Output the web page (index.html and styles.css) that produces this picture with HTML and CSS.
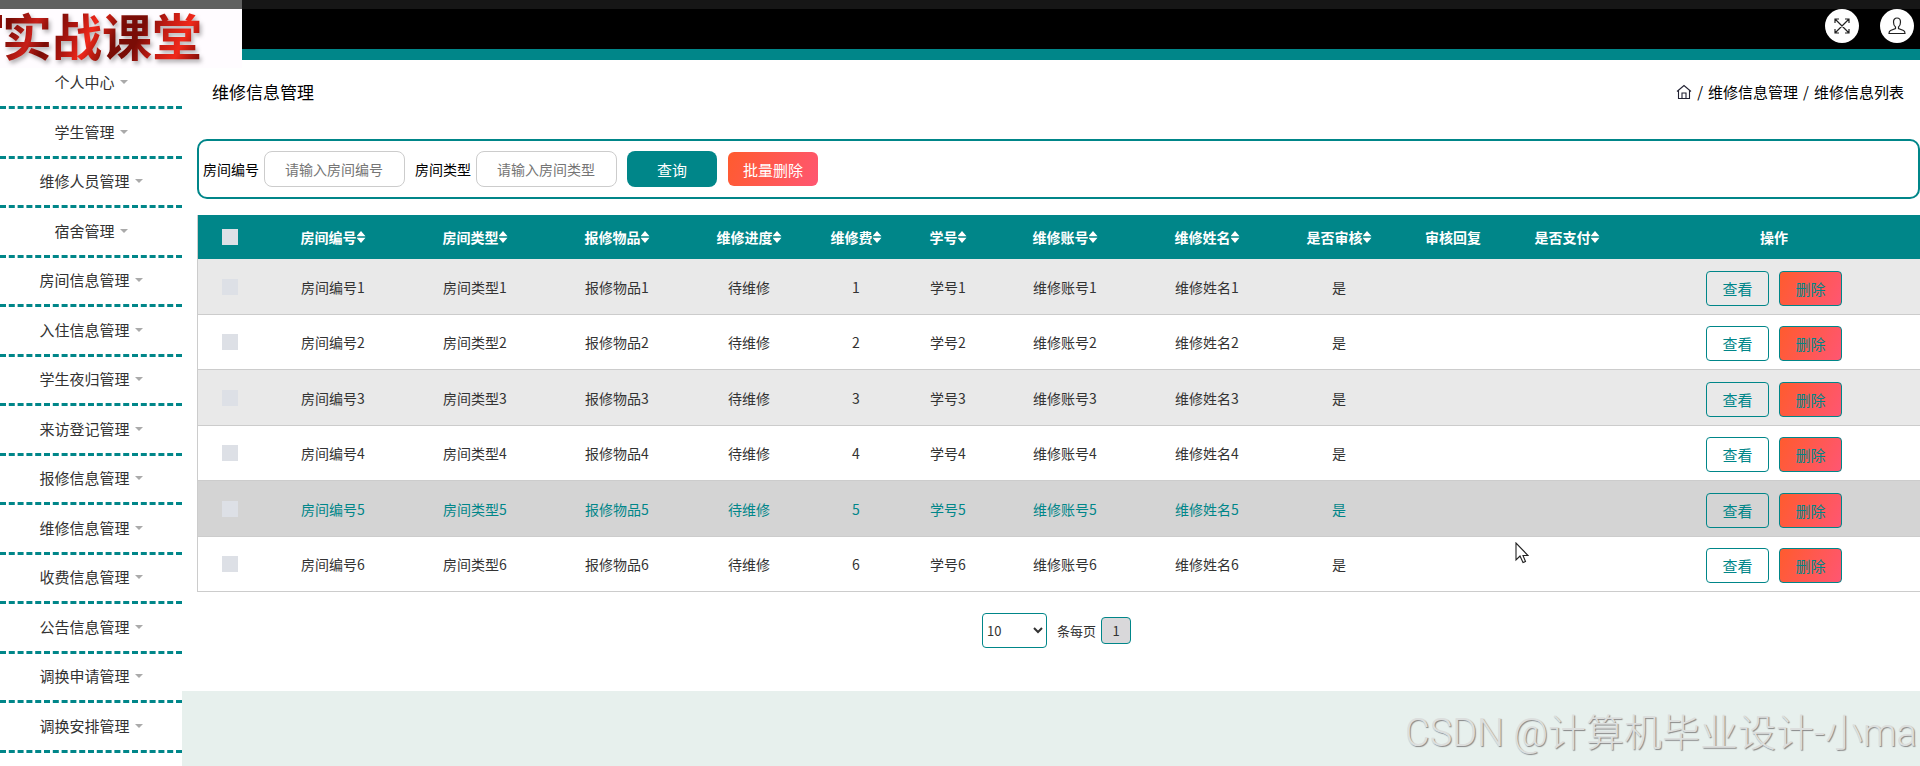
FILE: index.html
```html
<!doctype html>
<html lang="zh-CN">
    <head>
        <meta charset="utf-8">
        <title>维修信息管理</title>
        <meta name="viewport" content="width=device-width, initial-scale=1">
        <link rel="stylesheet" href="styles.css">
    </head>
    <body>
        <header class="header">
            <div class="logo"><span class="logo-text">实战课堂</span></div>
            <div class="header-tools">
                <button class="tool" type="button" aria-label="全屏">
                    <svg width="18" height="18" viewBox="0 0 18 18" fill="none" stroke="#222" stroke-width="1.2">
                        <path d="M2 2l14 14M16 2L2 16M2 6V2h4M12 2h4v4M16 12v4h-4M6 16H2v-4"/>
                    </svg>
                </button>
                <button class="tool" type="button" aria-label="用户">
                    <svg width="18" height="18" viewBox="0 0 18 18" fill="none" stroke="#222" stroke-width="1.2">
                        <path d="M7.500 11.500V10C6 9 5.500 7 5.500 5 5.500 2.500 7 1 9 1s3.500 1.500 3.500 4c0 2-.5 4-2 5v1.500l5 2c1 .5 1.500 1.500 1.500 3H1c0-1.500.5-2.500 1.500-3z"/>
                    </svg>
                </button>
            </div>
        </header>

        <div class="wrapper">
            <nav class="sidebar">
                <ul class="menu">
                    <li><a href="#">个人中心</a></li>
                    <li><a href="#">学生管理</a></li>
                    <li><a href="#">维修人员管理</a></li>
                    <li><a href="#">宿舍管理</a></li>
                    <li><a href="#">房间信息管理</a></li>
                    <li><a href="#">入住信息管理</a></li>
                    <li><a href="#">学生夜归管理</a></li>
                    <li><a href="#">来访登记管理</a></li>
                    <li><a href="#">报修信息管理</a></li>
                    <li><a href="#">维修信息管理</a></li>
                    <li><a href="#">收费信息管理</a></li>
                    <li><a href="#">公告信息管理</a></li>
                    <li><a href="#">调换申请管理</a></li>
                    <li><a href="#">调换安排管理</a></li>
                </ul>
            </nav>

            <main class="content">
                <div class="page">
                    <div class="page-head">
                        <h1 class="page-title">维修信息管理</h1>
                        <div class="breadcrumb">
                            <a href="#" aria-label="首页">
                                <svg width="16" height="16" viewBox="0 0 16 16" fill="none" stroke="#223" stroke-width="1.1">
                                    <path d="M1 7.500L8 1.500l7 6M2.500 6.500v8h11v-8M6 14.500V9h4v5.500"/>
                                </svg>
                            </a>
                            <span>/</span>
                            <a href="#">维修信息管理</a>
                            <span>/</span>
                            <span>维修信息列表</span>
                        </div>
                    </div>

                    <form class="search">
                        <label for="room-no">房间编号</label>
                        <input class="search-input" id="room-no" type="text" placeholder="请输入房间编号">
                        <label for="room-type">房间类型</label>
                        <input class="search-input" id="room-type" type="text" placeholder="请输入房间类型">
                        <button class="btn btn-query" type="button">查询</button>
                        <button class="btn btn-batch" type="button">批量删除</button>
                    </form>

                    <table class="list">
                        <colgroup>
                            <col class="col-check">
                            <col class="col-wide"><col class="col-wide"><col class="col-wide">
                            <col class="col-mid"><col class="col-small"><col class="col-small">
                            <col class="col-wide"><col class="col-wide">
                            <col class="col-mid"><col class="col-reply"><col class="col-mid">
                            <col>
                        </colgroup>
                        <thead>
                            <tr>
                                <th><input class="check" type="checkbox" aria-label="全选"></th>
                                <th><span class="sort">房间编号</span></th>
                                <th><span class="sort">房间类型</span></th>
                                <th><span class="sort">报修物品</span></th>
                                <th><span class="sort">维修进度</span></th>
                                <th><span class="sort">维修费</span></th>
                                <th><span class="sort">学号</span></th>
                                <th><span class="sort">维修账号</span></th>
                                <th><span class="sort">维修姓名</span></th>
                                <th><span class="sort">是否审核</span></th>
                                <th>审核回复</th>
                                <th><span class="sort">是否支付</span></th>
                                <th>操作</th>
                            </tr>
                        </thead>
                        <tbody>
                            <tr>
                                <td><input class="check" type="checkbox" aria-label="选择1"></td>
                                <td>房间编号1</td><td>房间类型1</td><td>报修物品1</td><td>待维修</td><td>1</td>
                                <td>学号1</td><td>维修账号1</td><td>维修姓名1</td><td>是</td><td></td><td></td>
                                <td><div class="actions"><button class="btn-view" type="button">查看</button><button class="btn-view btn-del" type="button">删除</button></div></td>
                            </tr>
                            <tr>
                                <td><input class="check" type="checkbox" aria-label="选择2"></td>
                                <td>房间编号2</td><td>房间类型2</td><td>报修物品2</td><td>待维修</td><td>2</td>
                                <td>学号2</td><td>维修账号2</td><td>维修姓名2</td><td>是</td><td></td><td></td>
                                <td><div class="actions"><button class="btn-view" type="button">查看</button><button class="btn-view btn-del" type="button">删除</button></div></td>
                            </tr>
                            <tr>
                                <td><input class="check" type="checkbox" aria-label="选择3"></td>
                                <td>房间编号3</td><td>房间类型3</td><td>报修物品3</td><td>待维修</td><td>3</td>
                                <td>学号3</td><td>维修账号3</td><td>维修姓名3</td><td>是</td><td></td><td></td>
                                <td><div class="actions"><button class="btn-view" type="button">查看</button><button class="btn-view btn-del" type="button">删除</button></div></td>
                            </tr>
                            <tr>
                                <td><input class="check" type="checkbox" aria-label="选择4"></td>
                                <td>房间编号4</td><td>房间类型4</td><td>报修物品4</td><td>待维修</td><td>4</td>
                                <td>学号4</td><td>维修账号4</td><td>维修姓名4</td><td>是</td><td></td><td></td>
                                <td><div class="actions"><button class="btn-view" type="button">查看</button><button class="btn-view btn-del" type="button">删除</button></div></td>
                            </tr>
                            <tr class="current">
                                <td><input class="check" type="checkbox" aria-label="选择5"></td>
                                <td>房间编号5</td><td>房间类型5</td><td>报修物品5</td><td>待维修</td><td>5</td>
                                <td>学号5</td><td>维修账号5</td><td>维修姓名5</td><td>是</td><td></td><td></td>
                                <td><div class="actions"><button class="btn-view" type="button">查看</button><button class="btn-view btn-del" type="button">删除</button></div></td>
                            </tr>
                            <tr>
                                <td><input class="check" type="checkbox" aria-label="选择6"></td>
                                <td>房间编号6</td><td>房间类型6</td><td>报修物品6</td><td>待维修</td><td>6</td>
                                <td>学号6</td><td>维修账号6</td><td>维修姓名6</td><td>是</td><td></td><td></td>
                                <td><div class="actions"><button class="btn-view" type="button">查看</button><button class="btn-view btn-del" type="button">删除</button></div></td>
                            </tr>
                        </tbody>
                    </table>

                    <div class="pager">
                        <select class="pager-size" id="page-size">
                            <option>10</option>
                            <option>25</option>
                            <option>50</option>
                        </select>
                        <label for="page-size">条每页</label>
                        <button class="pager-num" type="button">1</button>
                    </div>
                </div>
            </main>
        </div>

        <div class="watermark">CSDN @计算机毕业设计-小ma</div>
        <svg class="cursor" width="14" height="22" viewBox="0 0 14 22" fill="#fff" stroke="#222" stroke-width="1.1">
            <path d="M1 1v17l4-4 3 6.500 2.500-1L8 13.500h5z"/>
        </svg>
    </body>
</html>
```
FILE: styles.css
```css
* {
    box-sizing: border-box;
    margin: 0;
    padding: 0;
}

html, body {
    height: 100%;
}

body {
    position: relative;
    display: flex;
    flex-direction: column;
    background: #fff;
    color: #333;
    font-family: "Noto Sans CJK SC", sans-serif;
    font-size: 14px;
    line-height: 20px;
}

button, input, select {
    font-family: inherit;
}

a {
    color: inherit;
    text-decoration: none;
}

/* header */
.header {
    display: flex;
    flex: none;
    height: 60px;
    background: #000;
    border-top: 9px solid #161616;
    border-bottom: 11px solid #008689;
}

.logo {
    display: flex;
    align-items: flex-start;
    justify-content: space-between;
    position: relative;
    width: 242px;
    height: 68px;
    margin-top: -9px;
    padding-right: 40px;
    background: #fffcff;
    border-top: 9px solid #606060;
}

/* red edge at the left side of the logo */
.logo::before {
    content: "";
    width: 2px;
    height: 13px;
    margin-top: 6px;
    background: #8a0e08;
}

.logo-text {
    padding-bottom: 8px;
    font-size: 50px;
    font-weight: 700;
    line-height: 50px;
    color: transparent;
    background: linear-gradient(115deg, #7a0c06 6%, #c8201a 18%, #7a0c06 26%, #b01610 36%, #f0281a 44%, #7a0c06 56%, #7a0c06 66%, #b81a12 74%, #f0281a 86%, #7a0c06 98%);
    -webkit-background-clip: text;
    background-clip: text;
    filter: drop-shadow(2px 3px 2px rgba(0, 0, 0, 0.3));
}

.header-tools {
    display: flex;
    gap: 21px;
    margin-left: auto;
    padding-right: 6px;
}

.tool {
    display: flex;
    align-items: center;
    justify-content: center;
    width: 34px;
    height: 34px;
    background: #fff;
    border: 0;
    border-radius: 50%;
}

.wrapper {
    display: flex;
    flex: 1;
}

/* sidebar */
.sidebar {
    flex: none;
    width: 182px;
}

.menu {
    list-style: none;
}

.menu a {
    display: flex;
    align-items: center;
    justify-content: center;
    gap: 5px;
    height: 49px;
    padding-bottom: 2px;
    border-bottom: 3px dashed #008689;
    font-size: 15px;
}

.menu li:nth-child(even) a {
    height: 50px;
}

.menu a::after {
    content: "";
    border: 4px solid transparent;
    border-top-color: #aaa;
    border-bottom: 0;
}

/* content */
.content {
    flex: 1;
    min-width: 0;
    background: #e7f0ed;
}

.page {
    padding: 0 0 43px 15px;
    background: #fff;
}

.page-head {
    display: flex;
    align-items: center;
    justify-content: space-between;
    height: 79px;
    padding: 0 16px 16px 15px;
    color: #000;
}

.page-title {
    font-size: 17px;
    font-weight: 400;
}

.breadcrumb {
    display: flex;
    align-items: center;
    gap: 5px;
    font-size: 15px;
}

.breadcrumb svg {
    display: block;
}

.search {
    display: flex;
    align-items: center;
    height: 60px;
    padding: 0 4px;
    border: 2px solid #008689;
    border-radius: 10px;
    color: #000;
}

.search-input {
    width: 141px;
    height: 36px;
    margin: 0 10px 0 5px;
    padding: 0 20px;
    border: 1px solid #ccc;
    border-radius: 8px;
    font-size: 14px;
}

.search-input::placeholder {
    color: #757575;
}

.btn {
    width: 90px;
    height: 36px;
    border: 0;
    border-radius: 8px;
    color: #fff;
    font-size: 15px;
}

.btn-query {
    margin-right: 11px;
    background: #008689;
}

.btn-batch {
    height: 34px;
    border-radius: 6px;
    background: linear-gradient(115deg, #ff5b2e, #ff5672);
}

/* table */
.list {
    width: 100%;
    margin-top: 16px;
    table-layout: fixed;
    border-collapse: separate;
    border-spacing: 0;
    border-left: 1px solid #ccc;
    text-align: center;
}

.col-check {
    width: 64px;
}

.col-wide {
    width: 142px;
}

.col-mid {
    width: 122px;
}

.col-small {
    width: 92px;
}

.col-reply {
    width: 106px;
}

.list th {
    height: 44px;
    background: #008689;
    color: #fff;
    font-weight: 700;
}

.list td {
    height: 56px;
    border-bottom: 1px solid #ccc;
}

.list tbody tr:nth-child(even) td {
    height: 55px;
}

.list tbody tr:nth-child(odd) {
    background: #e9e9e9;
}

.list tbody tr.current {
    background: #d4d4d4;
    color: #008689;
}

.sort {
    display: inline-flex;
    align-items: center;
}

/* up and down triangles */
.sort::after {
    content: "";
    width: 9px;
    height: 12px;
    background: #fff;
    clip-path: polygon(50% 0, 100% 44%, 0 44%, 0 56%, 100% 56%, 50% 100%, 0 56%, 0 44%);
}

.check {
    display: block;
    width: 16px;
    height: 16px;
    margin: 0 auto;
    appearance: none;
    background: #dde0e6;
}

.actions {
    display: flex;
    justify-content: center;
    gap: 10px;
    padding-top: 3px;
}

.btn-view {
    width: 63px;
    height: 35px;
    background: transparent;
    border: 1px solid #008689;
    border-radius: 4px;
    color: #008689;
    font-size: 15px;
}

.btn-del {
    background: linear-gradient(115deg, #ff5b2e, #ff5672);
}

/* pager */
.pager {
    display: flex;
    align-items: center;
    justify-content: center;
    margin-top: 21px;
    padding-right: 4px;
    font-size: 13px;
}

.pager-size {
    width: 65px;
    height: 35px;
    margin-right: 10px;
    background: #fff;
    border: 1px solid #008689;
    border-radius: 4px;
    color: #333;
    font-size: 13px;
}

.pager-num {
    width: 30px;
    height: 27px;
    margin-left: 5px;
    background: #d9d8da;
    border: 1px solid #008689;
    border-radius: 4px;
    color: #333;
    font-size: 13px;
}

.watermark {
    position: absolute;
    right: 3px;
    bottom: 8px;
    color: #dcdedd;
    font-family: Roboto, "Noto Sans CJK SC", sans-serif;
    font-size: 38px;
    font-weight: 300;
    line-height: 50px;
    white-space: nowrap;
    text-shadow: 1px 1px 1px #888;
}

.cursor {
    position: absolute;
    left: 1515px;
    top: 542px;
}
```
